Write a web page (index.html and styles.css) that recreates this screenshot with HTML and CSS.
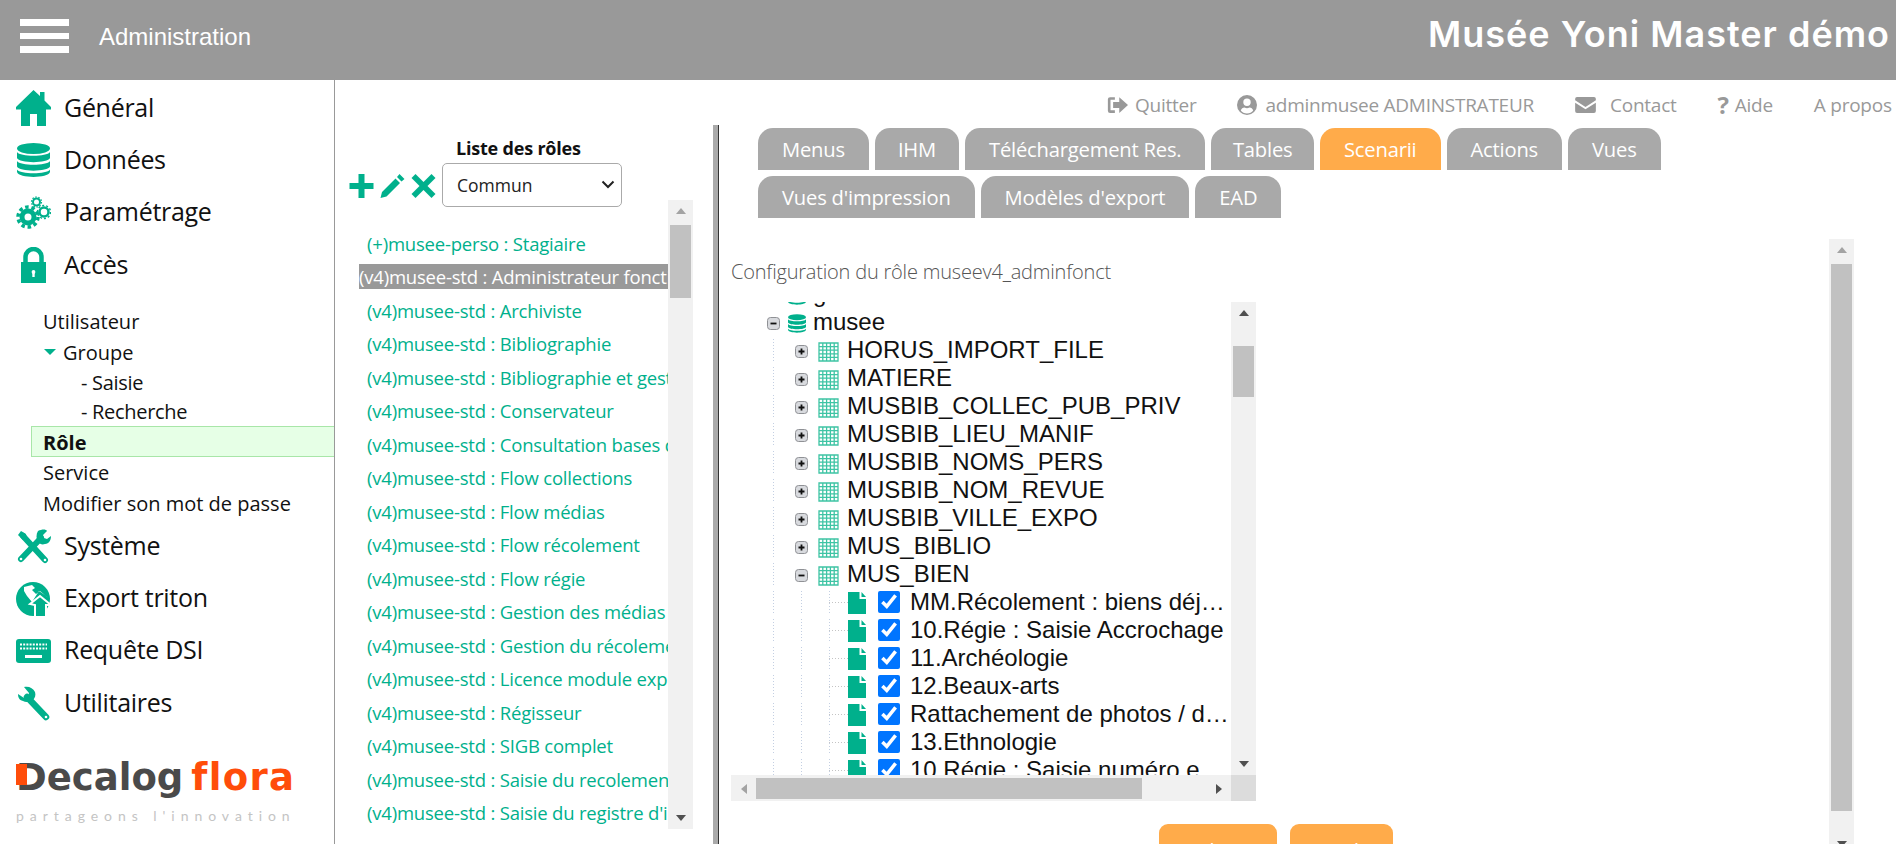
FILE: index.html
```html
<!DOCTYPE html>
<html lang="fr">
<head>
  <meta charset="UTF-8">
  <title>Administration</title>
  <link rel="stylesheet" href="styles.css">
</head>
<body>

<svg class="icon-defs">
  <symbol id="i-plus-box" viewBox="0 0 13 13"><rect x=".5" y=".5" width="12" height="12" rx="3" fill="#d8dade" stroke="#8f9195"/><path d="M3.5 6.5h6M6.5 3.5v6" stroke="#111" stroke-width="1.8"/></symbol>
  <symbol id="i-minus-box" viewBox="0 0 13 13"><rect x=".5" y=".5" width="12" height="12" rx="3" fill="#d8dade" stroke="#8f9195"/><path d="M3.5 6.5h6" stroke="#111" stroke-width="1.8"/></symbol>
  <symbol id="i-grid" viewBox="0 0 21 20"><path d="M1 1h19v18H1zM4.800 1v18M8.600 1v18M12.400 1v18M16.200 1v18M1 4.600h19M1 8.200h19M1 11.800h19M1 15.400h19" fill="#fff" stroke="#3ec4a4" stroke-width="1.300"/></symbol>
  <symbol id="i-file" viewBox="0 0 18 22"><path d="M0 0h11.500v7H18v15H0z" fill="#00b08c"/><path d="M13.500 0L18 5h-4.500z" fill="#00b08c"/></symbol>
  <symbol id="i-db" viewBox="0 0 33 34"><ellipse cx="16.500" cy="5.500" rx="16.500" ry="5.500"/><path d="M0 9c3 5 30 5 33 0v6c-2 5.500-31 5.500-33 0zM0 18c3 5 30 5 33 0v5.500c-2 5.500-31 5.500-33 0zM0 26.500c3 5 30 5 33 0V29c-2 6.500-31 6.500-33 0z"/></symbol>
</svg>

<header class="topbar">
  <div class="burger"><span></span><span></span><span></span></div>
  <div class="topbar-label">Administration</div>
  <div class="topbar-title">Musée Yoni Master démo</div>
</header>

<div class="page">
  <nav class="sidebar">
    <a class="nav-item">
      <svg class="nav-icon" viewBox="0 0 35 36"><path d="M17.500 0L24 6V2h4.500v8.500L35 17v2.500h-5V36h-9V24h-7v12H5V19.500H0V17z"/></svg>
      Général
    </a>
    <a class="nav-item">
      <svg class="nav-icon" viewBox="0 0 35 36"><use href="#i-db" x="1" y="1" width="33" height="34"/></svg>
      Données
    </a>
    <a class="nav-item">
      <svg class="nav-icon" viewBox="0 0 35 36">
        <g fill="none" stroke="#00b08c">
          <circle cx="12" cy="22" r="6" stroke-width="5"/>
          <circle cx="12" cy="22" r="10" stroke-width="3.500" stroke-dasharray="3.500 2.780"/>
          <circle cx="28" cy="17" r="4.500" stroke-width="2.500"/>
          <circle cx="28" cy="17" r="6.500" stroke-width="1.500" stroke-dasharray="2 2"/>
          <circle cx="20.500" cy="7" r="3.500" stroke-width="2"/>
          <circle cx="20.500" cy="7" r="5" stroke-width="1.200" stroke-dasharray="1.600 1.500"/>
        </g>
      </svg>
      Paramétrage
    </a>
    <a class="nav-item">
      <svg class="nav-icon" viewBox="0 0 35 36">
        <path d="M9.500 16V10a8 8 0 0 1 16 0v6" fill="none" stroke="#00b08c" stroke-width="4.500"/>
        <path d="M5 15h25v21H5z"/>
        <path d="M16.300 25h2.400v5h-2.400z" fill="#fff"/><circle cx="17.500" cy="25" r="1.900" fill="#fff"/>
      </svg>
      Accès
    </a>

    <div class="subnav">
      <a class="sub-item">Utilisateur</a>
      <a class="sub-item sub-open">Groupe</a>
      <a class="sub-child">- Saisie</a>
      <a class="sub-child">- Recherche</a>
      <a class="sub-item sub-active">Rôle</a>
      <a class="sub-item">Service</a>
      <a class="sub-item">Modifier son mot de passe</a>
    </div>

    <a class="nav-item">
      <svg class="nav-icon" viewBox="0 0 35 36">
        <path d="M7 8l22 24" stroke="#00b08c" stroke-width="6" stroke-linecap="round"/>
        <path d="M5 3l5 3 1 5-4 1-5-5z"/>
        <path d="M5 31L25 10" stroke="#00b08c" stroke-width="6" stroke-linecap="round"/>
        <path d="M22 3c4-2 8-2 9 0l-4 4 1 3 3 1 4-3c0 4-2 8-6 8-3 1-5 0-7-2-2-3-2-8 0-11z"/>
        <circle cx="5" cy="31" r="1.300" fill="#fff"/><circle cx="29" cy="32" r="1.300" fill="#fff"/>
      </svg>
      Système
    </a>
    <a class="nav-item">
      <svg class="nav-icon" viewBox="0 0 35 36">
        <circle cx="17" cy="18" r="17"/>
        <path d="M8 6l8-2 3 3-3 2 4 4 4-3 6 5 3 2-10-7-7 11-5-6-3-5z" fill="#fff"/>
        <path d="M14 23l10-8 11 9h-5v12H19V24z" stroke="#fff" stroke-width="2"/>
      </svg>
      Export triton
    </a>
    <a class="nav-item">
      <svg class="nav-icon" viewBox="0 0 35 36">
        <rect x="0" y="6" width="35" height="24" rx="3"/>
        <path d="M4 11.500h27M4 15.500h27" stroke="#fff" stroke-width="2" stroke-dasharray="2 1.200"/>
        <path d="M9 22h17v3H9z" fill="#fff"/>
      </svg>
      Requête DSI
    </a>
    <a class="nav-item">
      <svg class="nav-icon" viewBox="0 0 35 36">
        <path d="M11 12l19 20" stroke="#00b08c" stroke-width="6.500" stroke-linecap="round"/>
        <path d="M2 9l6 4 4-1 1-4-5-6c5-1 9 1 11 5 1 3 0 6-2 8-3 2-7 3-10 1-4-1-5-4-5-7z"/>
        <circle cx="30" cy="32" r="1.300" fill="#fff"/>
      </svg>
      Utilitaires
    </a>

    <div class="logo">
      <div class="logo-name"><span class="logo-flag"></span><span class="logo-decalog">Decalog</span><span class="logo-flora">flora</span></div>
      <div class="logo-tag">partageons l'innovation</div>
    </div>
  </nav>

  <main class="content">
    <div class="toplinks">
      <a class="toplink">
        <svg viewBox="0 0 24 20" width="21" height="18"><path d="M9 1H3.500A2.500 2.500 0 0 0 1 3.500v13A2.500 2.500 0 0 0 3.500 19H9v-3H4V4h5z"/><path d="M7 6.500h7V1l10 9-10 9v-5.500H7z"/></svg>
        Quitter
      </a>
      <a class="toplink toplink-user">
        <svg viewBox="0 0 20 20" width="20" height="20"><path fill-rule="evenodd" d="M10 0a10 10 0 1 1 0 20a10 10 0 0 1 0-20zM10 3.500a3.700 3.700 0 1 0 0 7.400a3.700 3.700 0 0 0 0-7.400zM3.800 15.500c1.300 1.800 3.700 3 6.200 3s4.900-1.200 6.200-3c-.6-1.800-2-2.900-3.700-2.900c-.8.400-1.600.600-2.500.600s-1.700-.2-2.500-.6c-1.700 0-3.100 1.100-3.700 2.900z"/></svg>
        adminmusee ADMINSTRATEUR
      </a>
      <a class="toplink toplink-contact">
        <svg viewBox="0 0 22 17" width="21" height="16"><path d="M2 0h18a2 2 0 0 1 2 2v1.500l-11 7-11-7V2a2 2 0 0 1 2-2z"/><path d="M0 6l11 7 11-7v9a2 2 0 0 1-2 2H2a2 2 0 0 1-2-2z"/></svg>
        Contact
      </a>
      <a class="toplink toplink-help"><b>?</b> Aide</a>
      <a class="toplink">A propos</a>
    </div>

    <div class="workspace">
      <section class="roles">
        <div class="roles-head">
          <div class="roles-title">Liste des rôles</div>
          <div class="roles-tools">
            <svg class="tool" viewBox="0 0 24 24"><path d="M9 0h6v9h9v6h-9v9H9v-9H0V9h9z"/></svg>
            <svg class="tool" viewBox="0 0 24 24"><path d="M0 24l1.500-6L15 4.500 19.500 9 6 22.500zM16.500 3l2.500-3L24 5l-3 2.500z"/></svg>
            <svg class="tool" viewBox="0 0 24 24"><path d="M0 4L4 0l8 8 8-8 4 4-8 8 8 8-4 4-8-8-8 8-4-4 8-8z"/></svg>
            <div class="select-wrap">
              <select class="roles-select"><option>Commun</option><option>Tous</option></select>
              <svg class="select-chevron" viewBox="0 0 14 9"><path d="M1.500 1.500L7 7l5.500-5.500" fill="none" stroke="#222" stroke-width="2"/></svg>
            </div>
          </div>
        </div>

        <div class="roles-box">
          <ul class="roles-list">
            <li>(+)musee-perso : Stagiaire</li>
            <li class="selected">(v4)musee-std : Administrateur fonctionnel</li>
            <li>(v4)musee-std : Archiviste</li>
            <li>(v4)musee-std : Bibliographie</li>
            <li>(v4)musee-std : Bibliographie et gestion</li>
            <li>(v4)musee-std : Conservateur</li>
            <li>(v4)musee-std : Consultation bases de données</li>
            <li>(v4)musee-std : Flow collections</li>
            <li>(v4)musee-std : Flow médias</li>
            <li>(v4)musee-std : Flow récolement</li>
            <li>(v4)musee-std : Flow régie</li>
            <li>(v4)musee-std : Gestion des médias</li>
            <li>(v4)musee-std : Gestion du récolement</li>
            <li>(v4)musee-std : Licence module export</li>
            <li>(v4)musee-std : Régisseur</li>
            <li>(v4)musee-std : SIGB complet</li>
            <li>(v4)musee-std : Saisie du recolement</li>
            <li>(v4)musee-std : Saisie du registre d'inventaire</li>
          </ul>
          <div class="vbar vbar-roles">
            <i class="arrow arrow-up arrow-off"></i>
            <div class="thumb"></div>
            <i class="arrow arrow-down"></i>
          </div>
        </div>
      </section>

      <div class="splitter"></div>

      <section class="editor">
        <div class="tabs">
          <a class="tab">Menus</a>
          <a class="tab tab-ihm">IHM</a>
          <a class="tab">Téléchargement Res.</a>
          <a class="tab tab-tables">Tables</a>
          <a class="tab tab-active">Scenarii</a>
          <a class="tab">Actions</a>
          <a class="tab">Vues</a>
          <a class="tab">Vues d'impression</a>
          <a class="tab">Modèles d'export</a>
          <a class="tab">EAD</a>
        </div>

        <div class="editor-body">
          <div class="editor-main">
            <div class="config-label">Configuration du rôle museev4_adminfonct</div>

            <div class="tree-box">
              <div class="tree-view">
                <div class="tree-row tree-first"><span class="cell"><svg class="exp"><use href="#i-minus-box"/></svg></span><svg class="db"><use href="#i-db"/></svg><span class="label">gestion</span></div>
                <div class="tree-row"><span class="cell"><svg class="exp"><use href="#i-minus-box"/></svg></span><svg class="db"><use href="#i-db"/></svg><span class="label">musee</span></div>

                <div class="tree-row"><span class="cell guide"></span><span class="cell"><svg class="exp"><use href="#i-plus-box"/></svg></span><svg class="grid"><use href="#i-grid"/></svg><span class="label">HORUS_IMPORT_FILE</span></div>
                <div class="tree-row"><span class="cell guide"></span><span class="cell"><svg class="exp"><use href="#i-plus-box"/></svg></span><svg class="grid"><use href="#i-grid"/></svg><span class="label">MATIERE</span></div>
                <div class="tree-row"><span class="cell guide"></span><span class="cell"><svg class="exp"><use href="#i-plus-box"/></svg></span><svg class="grid"><use href="#i-grid"/></svg><span class="label">MUSBIB_COLLEC_PUB_PRIV</span></div>
                <div class="tree-row"><span class="cell guide"></span><span class="cell"><svg class="exp"><use href="#i-plus-box"/></svg></span><svg class="grid"><use href="#i-grid"/></svg><span class="label">MUSBIB_LIEU_MANIF</span></div>
                <div class="tree-row"><span class="cell guide"></span><span class="cell"><svg class="exp"><use href="#i-plus-box"/></svg></span><svg class="grid"><use href="#i-grid"/></svg><span class="label">MUSBIB_NOMS_PERS</span></div>
                <div class="tree-row"><span class="cell guide"></span><span class="cell"><svg class="exp"><use href="#i-plus-box"/></svg></span><svg class="grid"><use href="#i-grid"/></svg><span class="label">MUSBIB_NOM_REVUE</span></div>
                <div class="tree-row"><span class="cell guide"></span><span class="cell"><svg class="exp"><use href="#i-plus-box"/></svg></span><svg class="grid"><use href="#i-grid"/></svg><span class="label">MUSBIB_VILLE_EXPO</span></div>
                <div class="tree-row"><span class="cell guide"></span><span class="cell"><svg class="exp"><use href="#i-plus-box"/></svg></span><svg class="grid"><use href="#i-grid"/></svg><span class="label">MUS_BIBLIO</span></div>
                <div class="tree-row"><span class="cell guide"></span><span class="cell"><svg class="exp"><use href="#i-minus-box"/></svg></span><svg class="grid"><use href="#i-grid"/></svg><span class="label">MUS_BIEN</span></div>

                <div class="tree-row"><span class="cell guide"></span><span class="cell guide"></span><span class="cell guide branch"></span><svg class="file"><use href="#i-file"/></svg><input class="check" type="checkbox" checked><span class="label">MM.Récolement : biens déjà récolés</span></div>
                <div class="tree-row"><span class="cell guide"></span><span class="cell guide"></span><span class="cell guide branch"></span><svg class="file"><use href="#i-file"/></svg><input class="check" type="checkbox" checked><span class="label">10.Régie : Saisie Accrochage</span></div>
                <div class="tree-row"><span class="cell guide"></span><span class="cell guide"></span><span class="cell guide branch"></span><svg class="file"><use href="#i-file"/></svg><input class="check" type="checkbox" checked><span class="label">11.Archéologie</span></div>
                <div class="tree-row"><span class="cell guide"></span><span class="cell guide"></span><span class="cell guide branch"></span><svg class="file"><use href="#i-file"/></svg><input class="check" type="checkbox" checked><span class="label">12.Beaux-arts</span></div>
                <div class="tree-row"><span class="cell guide"></span><span class="cell guide"></span><span class="cell guide branch"></span><svg class="file"><use href="#i-file"/></svg><input class="check" type="checkbox" checked><span class="label">Rattachement de photos / documents</span></div>
                <div class="tree-row"><span class="cell guide"></span><span class="cell guide"></span><span class="cell guide branch"></span><svg class="file"><use href="#i-file"/></svg><input class="check" type="checkbox" checked><span class="label">13.Ethnologie</span></div>
                <div class="tree-row"><span class="cell guide"></span><span class="cell guide"></span><span class="cell guide branch"></span><svg class="file"><use href="#i-file"/></svg><input class="check" type="checkbox" checked><span class="label">10.Régie : Saisie numéro en série</span></div>
              </div>

              <div class="vbar vbar-tree">
                <i class="arrow arrow-up"></i>
                <div class="thumb"></div>
                <i class="arrow arrow-down"></i>
              </div>
              <div class="hbar">
                <i class="arrow arrow-left arrow-off"></i>
                <div class="hthumb"></div>
                <i class="arrow arrow-right"></i>
              </div>
              <div class="corner"></div>
            </div>

            <div class="actions">
              <button class="btn btn-apply">Appliquer</button>
              <button class="btn btn-cancel">Annuler</button>
            </div>
          </div>

          <div class="vbar vbar-page">
            <i class="arrow arrow-up arrow-off"></i>
            <div class="thumb"></div>
            <i class="arrow arrow-down"></i>
          </div>
        </div>
      </section>
    </div>
  </main>
</div>

</body>
</html>
```

FILE: styles.css
```css
*, *::before, *::after {
  box-sizing: border-box;
}
html, body {
  height: 100%;
}
body {
  margin: 0;
  overflow: hidden;
  background: #fff;
  color: #111;
  font-family: "Open Sans", "Noto Sans", sans-serif;
}
.icon-defs {
  display: none;
}

/* header */
.topbar {
  display: flex;
  height: 80px;
  padding: 19px 6px 0 20px;
  background: #999;
  color: #fff;
}
.burger {
  display: flex;
  flex-direction: column;
  gap: 7px;
  width: 49px;
}
.burger span {
  height: 6.500px;
  background: #fff;
}
.topbar-label {
  margin-left: 30px;
  font-family: "Liberation Sans", sans-serif;
  font-size: 24px;
  line-height: 36px;
}
.topbar-title {
  margin-left: auto;
  margin-top: -8px;
  font-family: "Inter", sans-serif;
  font-size: 36px;
  font-weight: 600;
  letter-spacing: 1px;
  line-height: 46px;
}

.page {
  display: flex;
  height: calc(100% - 80px);
}

/* left menu */
.sidebar {
  flex: none;
  width: 335px;
  padding-top: 2px;
  border-right: 1px solid #999;
}
.nav-item {
  display: flex;
  align-items: center;
  height: 52.300px;
  padding: 0 0 3px 16px;
  font-size: 25px;
  letter-spacing: -.3px;
}
.nav-icon {
  flex: none;
  width: 35px;
  height: 36px;
  margin: 3px 13px 0 0;
  fill: #00b08c;
}
.subnav {
  padding: 15px 0 1px;
  font-size: 20px;
}
.subnav a {
  display: block;
}
.sub-item {
  height: 31px;
  padding-left: 43px;
  line-height: 31px;
}
.sub-child {
  height: 29px;
  padding-left: 81px;
  letter-spacing: -.3px;
  line-height: 29px;
}
.sub-open {
  position: relative;
  padding-left: 63px;
}
.sub-open::before {
  content: "";
  position: absolute;
  left: 44px;
  top: 12px;
  border: 6px solid transparent;
  border-top: 6px solid #00b08c;
  border-bottom: 0;
}
.sub-active {
  margin-left: 31px;
  padding-left: 11px;
  border: 1px solid #a8e6a8;
  border-right: 0;
  background: #e6ffe6;
  font-weight: 700;
}
.logo {
  margin: 26px 0 0 16px;
  white-space: nowrap;
}
.logo-name {
  position: relative;
  display: flex;
  align-items: baseline;
  height: 46px;
  line-height: 46px;
  font-family: "DejaVu Sans", sans-serif;
  font-size: 37px;
  font-weight: 700;
}
.logo-decalog {
  color: #4a4a4a;
}
.logo-flora {
  margin-left: 8px;
  letter-spacing: 1.300px;
  color: #ff4d0a;
}
.logo-flag {
  position: absolute;
  left: 0;
  top: 9px;
  width: 11px;
  height: 21px;
  background: #ff4d0a;
}
.logo-tag {
  margin-top: 6px;
  font-family: "Lato", sans-serif;
  font-size: 14px;
  letter-spacing: 5.950px;
  color: #c4c4c4;
  line-height: 18px;
}

/* right part */
.content {
  flex: 1;
  min-width: 0;
  display: flex;
  flex-direction: column;
}
.toplinks {
  display: flex;
  align-items: center;
  flex: none;
  gap: 41px;
  height: 45px;
  padding: 4px 0 0 772px;
  overflow: hidden;
  white-space: nowrap;
  font-size: 19px;
  letter-spacing: -.25px;
  color: #999;
}
.toplink {
  display: flex;
  align-items: center;
  gap: 7px;
  fill: #999;
}
.toplink-user {
  gap: 8px;
}
.toplink-contact {
  gap: 14px;
}
.toplink-help {
  gap: 6px;
}
.toplink-help b {
  font-size: 24px;
  line-height: 20px;
}
.workspace {
  flex: 1;
  min-height: 0;
  display: flex;
}

/* roles */
.roles {
  flex: none;
  width: 378px;
}
.roles-head {
  height: 75px;
  padding: 13px 0 0 14px;
}
.roles-title {
  margin-left: 107px;
  font-size: 18px;
  font-weight: 700;
  letter-spacing: -.2px;
  line-height: 20px;
}
.roles-tools {
  display: flex;
  align-items: center;
  margin-top: 5px;
}
.tool {
  width: 25px;
  height: 24px;
  margin-right: 6px;
  margin-top: 2px;
  fill: #00b08c;
}
.select-wrap {
  position: relative;
  width: 180px;
  height: 44px;
}
.roles-select {
  appearance: none;
  width: 100%;
  height: 100%;
  padding: 0 14px;
  border: 1px solid #aaa;
  border-radius: 5px;
  background: #fff;
  color: #222;
  font: inherit;
  font-size: 17.500px;
}
.select-chevron {
  position: absolute;
  right: 7px;
  top: 17px;
  width: 14px;
  height: 9px;
  pointer-events: none;
}
.roles-box {
  display: flex;
  width: 334px;
  height: 629px;
  margin-left: 24px;
}
.roles-list {
  flex: 1;
  min-width: 0;
  margin: 0;
  padding: 30.500px 0 0;
  list-style: none;
  overflow: hidden;
  font-size: 18.500px;
  letter-spacing: -.2px;
  color: #00b08c;
}
.roles-list li {
  height: 25px;
  margin-bottom: 8.530px;
  padding-left: 8px;
  line-height: 25px;
  white-space: nowrap;
  overflow: hidden;
}
.roles-list .selected {
  padding-left: 0;
  background: #999;
  color: #fff;
}

/* scrollbars */
.vbar {
  flex: none;
  position: relative;
  display: flex;
  flex-direction: column;
  align-items: center;
  width: 25px;
  background: #f1f1f1;
}
.thumb {
  width: 21px;
  background: #c1c1c1;
}
.arrow {
  width: 0;
  height: 0;
  border: 5px solid transparent;
}
.arrow-up {
  margin-top: 8px;
  border-top: 0;
  border-bottom: 6px solid #505050;
}
.arrow-down {
  margin-top: auto;
  margin-bottom: 8px;
  border-bottom: 0;
  border-top: 6px solid #505050;
}
.arrow-left {
  border-left: 0;
  border-right: 6px solid #505050;
}
.arrow-right {
  border-right: 0;
  border-left: 6px solid #505050;
}
.arrow-up.arrow-off {
  border-bottom-color: #a3a3a3;
}
.arrow-left.arrow-off {
  border-right-color: #a3a3a3;
}
.vbar-roles .thumb {
  height: 73px;
  margin-top: 11px;
}
.vbar-tree .thumb {
  height: 51px;
  margin-top: 30px;
}
.vbar-page {
  height: 616px;
  margin-right: 42px;
}
.vbar-page .thumb {
  height: 547px;
  margin-top: 11px;
}
.hbar {
  display: flex;
  align-items: center;
  padding: 1px 0 0 10px;
  background: #f1f1f1;
}
.hthumb {
  width: 386px;
  height: 21px;
  margin-left: 9px;
  background: #c1c1c1;
}
.hbar .arrow-right {
  margin-left: 74px;
}
.corner {
  background: #dcdcdc;
}

/* splitter between roles and editor */
.splitter {
  flex: none;
  width: 6px;
  background: #aaa;
  border-right: 1px solid #333;
}

/* editor */
.editor {
  flex: 1;
  min-width: 0;
}
.tabs {
  display: flex;
  flex-wrap: wrap;
  gap: 6px;
  width: 1110px;
  padding: 3px 0 0 39px;
}
.tab {
  height: 42px;
  padding: 0 24px;
  border-radius: 15px 15px 0 0;
  background: #a9a9a9;
  color: #fff;
  font-size: 20.200px;
  letter-spacing: -.2px;
  line-height: 42px;
  white-space: nowrap;
}
.tab-ihm {
  padding: 0 23px;
}
.tab-tables {
  padding: 0 21.500px;
}
.tab-active {
  background: #ffab4a;
}
.editor-body {
  display: flex;
  margin-top: 21px;
}
.editor-main {
  flex: 1;
  min-width: 0;
  padding: 23px 0 0 12px;
}
.config-label {
  height: 20px;
  margin-bottom: 20px;
  font-size: 20px;
  font-weight: 300;
  letter-spacing: -.2px;
  line-height: 20px;
  color: #555;
}
.tree-box {
  display: grid;
  grid-template-columns: 500px 25px;
  grid-template-rows: 473px 26px;
  width: 525px;
}
.tree-view {
  overflow: hidden;
  padding-left: 28px;
  font-family: "Liberation Sans", sans-serif;
  font-size: 24px;
  color: #111;
}
.tree-row {
  display: flex;
  align-items: center;
  height: 28px;
}
.tree-first {
  margin-top: -22px;
}
.cell {
  flex: none;
  display: flex;
  align-items: center;
  justify-content: center;
  width: 28px;
  height: 28px;
}
.guide {
  background: repeating-linear-gradient(to bottom, #c3cfe2 0 1px, transparent 1px 3px) center / 1px 23px no-repeat;
}
.branch {
  position: relative;
}
.branch::after {
  content: "";
  position: absolute;
  left: 14px;
  top: 14px;
  width: 19px;
  height: 1px;
  background: repeating-linear-gradient(to right, #c4c4c4 0 1px, transparent 1px 3px);
}
.exp {
  width: 13px;
  height: 13px;
  margin-top: 3px;
}
.db {
  flex: none;
  width: 18px;
  height: 21px;
  margin: 3px 7px 0 1px;
  fill: #00b08c;
}
.grid {
  flex: none;
  width: 21px;
  height: 20px;
  margin: 3px 8px 0 3px;
}
.file {
  flex: none;
  width: 18px;
  height: 22px;
  margin: 1px 11px 0 5px;
}
.check {
  flex: none;
  width: 22px;
  height: 22px;
  margin: 0 10px 0 1px;
}
.label {
  flex: 1;
  min-width: 0;
  overflow: hidden;
  white-space: nowrap;
  text-overflow: ellipsis;
}
.actions {
  display: flex;
  gap: 13px;
  margin: 23px 0 0 428px;
}
.btn {
  height: 52px;
  border: 0;
  border-radius: 9px;
  background: #ffab4a;
  color: #fff;
  font: inherit;
  font-size: 20px;
}
.btn-apply {
  width: 118px;
}
.btn-cancel {
  width: 103px;
}
```
